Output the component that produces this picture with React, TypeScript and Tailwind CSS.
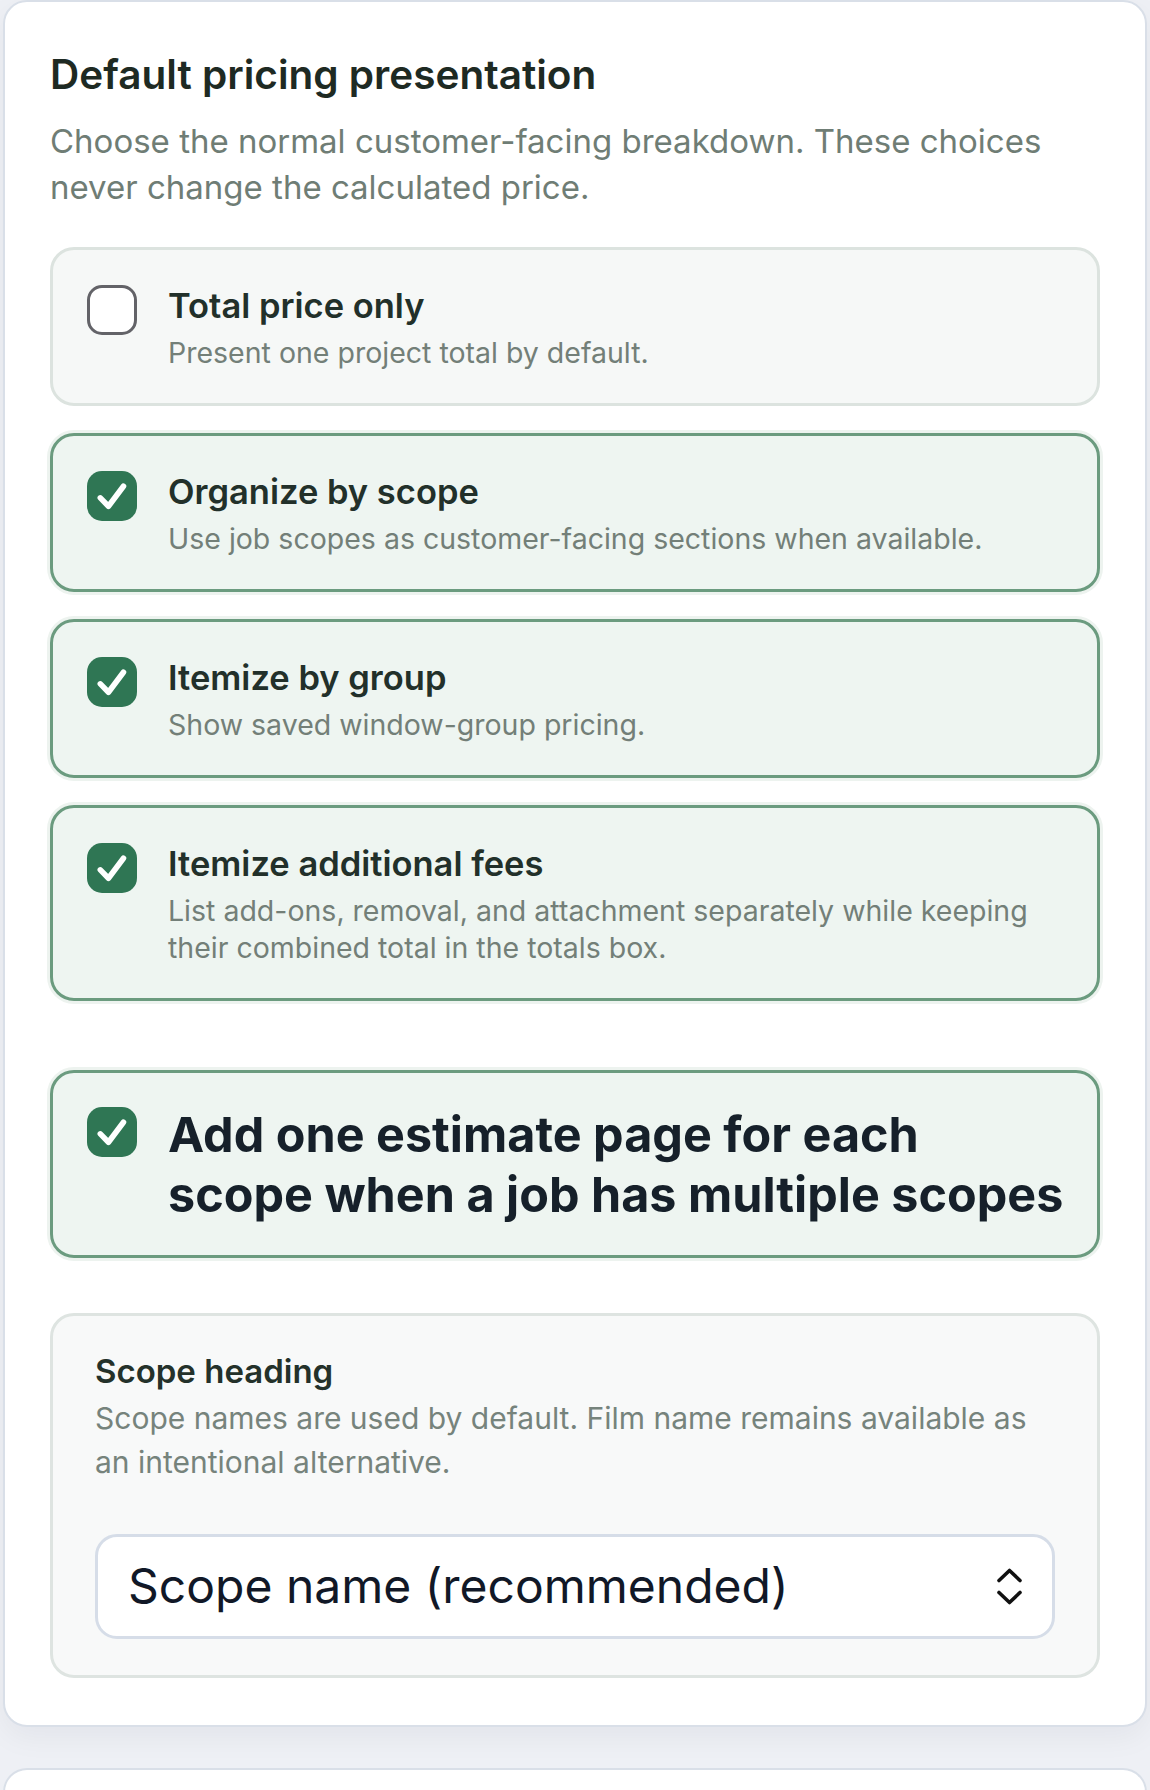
import React from 'react';

type Option = {
    title: string;
    hint: string;
    checked: boolean;
};

const options: Option[] = [
    { title: 'Total price only', hint: 'Present one project total by default.', checked: false },
    { title: 'Organize by scope', hint: 'Use job scopes as customer-facing sections when available.', checked: true },
    { title: 'Itemize by group', hint: 'Show saved window-group pricing.', checked: true },
    {
        title: 'Itemize additional fees',
        hint: 'List add-ons, removal, and attachment separately while keeping their combined total in the totals box.',
        checked: true,
    },
];

const Box = ({ checked }: { checked: boolean }) =>
    checked ? (
        <span className="mt-[2px] flex h-[50px] w-[50px] shrink-0 items-center justify-center rounded-[15px] bg-[#2f7654]">
            <svg width="50" height="50" viewBox="0 0 24 24" fill="none">
                <path d="M6.4 12.9 10.3 16.9 17.5 7.3" stroke="white" strokeWidth="2.7" strokeLinecap="round" strokeLinejoin="round" />
            </svg>
        </span>
    ) : (
        <span className="mt-[2px] h-[50px] w-[50px] shrink-0 rounded-[15px] border-[3px] border-[#636368] bg-white" />
    );

const OptionCard = ({ opt }: { opt: Option }) => (
    <label
        className={
            opt.checked
                ? 'flex items-start gap-[31px] rounded-[24px] border-[3px] border-[#6b9b7f] bg-[#eef5f1] pt-[33px] pb-[32px] pl-[34px] pr-[34px] shadow-[0_0_0_3px_#edf3ef]'
                : 'flex items-start gap-[31px] rounded-[24px] border-[3px] border-[#dce3df] bg-[#f6f8f7] pt-[33px] pb-[32px] pl-[34px] pr-[34px]'
        }
    >
        <Box checked={opt.checked} />
        <div className="min-w-0">
            <p className="text-[34.5px] leading-[45px] font-semibold text-[#22302a]">{opt.title}</p>
            <p className="mt-[6px] text-[28.5px] leading-[37px] text-[#737f78]">{opt.hint}</p>
        </div>
    </label>
);

export default function App() {
    return (
        <div className="min-h-screen bg-[#eef0f5] px-[3px] font-['Inter',sans-serif]">
            <section className="rounded-[24px] border-2 border-[#d9dfe8] bg-white px-[45px] pt-[49px] pb-[47px] shadow-[0_10px_30px_rgba(15,23,42,0.05)]">
                <h2 className="text-[40.5px] leading-[48px] font-semibold text-[#1e2a23]">Default pricing presentation</h2>
                <p className="mt-[20px] text-[33px] leading-[45.5px] text-[#6f7d75]">
                    Choose the normal customer-facing breakdown. These choices never change the calculated price.
                </p>

                <div className="mt-[37px] flex flex-col gap-[27px]">
                    {options.map((opt) => (
                        <OptionCard key={opt.title} opt={opt} />
                    ))}
                </div>

                {/* per-scope pages */}
                <label className="mt-[69px] flex items-start gap-[31px] rounded-[24px] border-[3px] border-[#6b9b7f] bg-[#eef5f1] pt-[32px] pb-[30px] pl-[34px] pr-[30px] shadow-[0_0_0_3px_#edf3ef]">
                    <Box checked />
                    <span className="text-[48.5px] leading-[60px] font-bold text-[#16202a]">
                        Add one estimate page for each scope when a job has multiple scopes
                    </span>
                </label>

                <div className="mt-[55px] rounded-[24px] border-[3px] border-[#dee4e1] bg-[#f8f9f9] pt-[35px] pb-[36px] px-[42px]">
                    <p className="text-[33px] leading-[40px] font-semibold text-[#24312a]">Scope heading</p>
                    <p className="mt-[5px] text-[30px] leading-[44px] text-[#76837c]">
                        Scope names are used by default. Film name remains available as an intentional alternative.
                    </p>
                    <div className="mt-[49.5px] flex h-[105px] items-center justify-between rounded-[22px] border-[3px] border-[#d6dde8] bg-white pl-[30px] pr-[29px]">
                        <span className="text-[48px] leading-[58px] text-[#111827]">Scope name (recommended)</span>
                        <svg width="27" height="37" viewBox="0 0 27 37" fill="none">
                            <path d="M3 12.5 13.5 2.5 24 12.5" stroke="#111" strokeWidth="3.6" strokeLinecap="round" strokeLinejoin="round" />
                            <path d="M3 24.5 13.5 34.5 24 24.5" stroke="#111" strokeWidth="3.6" strokeLinecap="round" strokeLinejoin="round" />
                        </svg>
                    </div>
                </div>
            </section>

            <div className="mt-[41px] h-[60px] rounded-t-[24px] border-2 border-b-0 border-[#d9dfe8] bg-white" />
        </div>
    );
}
